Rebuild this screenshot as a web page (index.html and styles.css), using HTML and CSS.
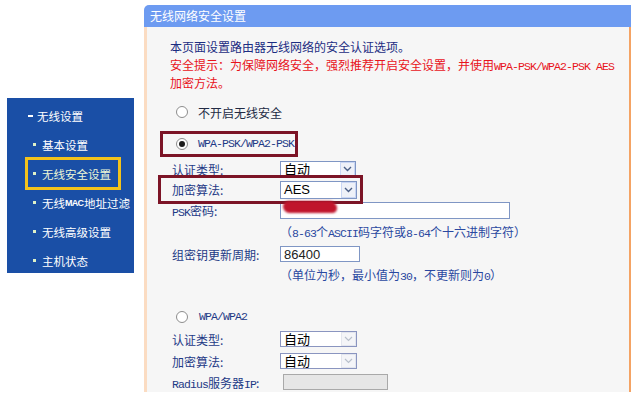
FILE: index.html
```html
<!DOCTYPE html>
<html lang="zh-CN">
<head>
<meta charset="utf-8">
<title>无线网络安全设置</title>
<link rel="stylesheet" href="styles.css">
</head>
<body>
<div class="page">
  <aside class="side">
    <nav class="menu">
      <div class="menu-head"><span class="dash"></span><span>无线设置</span></div>
      <ul class="menu-list">
        <li><span class="item"><span class="dot"></span>基本设置</span></li>
        <li><span class="item active"><span class="dot"></span>无线安全设置</span></li>
        <li><span class="item"><span class="dot"></span>无线<span class="mac">MAC</span>地址过滤</span></li>
        <li><span class="item"><span class="dot"></span>无线高级设置</span></li>
        <li><span class="item"><span class="dot"></span>主机状态</span></li>
      </ul>
    </nav>
  </aside>
  <section class="panel">
    <div class="panel-title">无线网络安全设置</div>
    <div class="panel-body">
      <p class="intro">本页面设置路由器无线网络的安全认证选项。</p>
      <p class="warn">安全提示：为保障网络安全，强烈推荐开启安全设置，并使用<span class="m">WPA-PSK/WPA2-PSK AES</span><br>加密方法。</p>

      <div class="radio-row r-off"><span class="radio"></span><span class="rtext">不开启无线安全</span></div>

      <div class="hl hl-radio"><span class="radio checked"></span><span class="rtext m">WPA-PSK/WPA2-PSK</span></div>

      <div class="row r-auth"><span class="label">认证类型:</span><span class="select s76"><span class="val">自动</span><span class="btn"><svg width="9" height="6" viewBox="0 0 9 6"><path d="M1 1 L4.5 4.5 L8 1" fill="none" stroke="#4a5f86" stroke-width="1.4"/></svg></span></span></div>

      <div class="hl hl-row"><span class="label">加密算法:</span><span class="select s77 tall"><span class="val sans">AES</span><span class="btn"><svg width="9" height="6" viewBox="0 0 9 6"><path d="M1 1 L4.5 4.5 L8 1" fill="none" stroke="#4a5f86" stroke-width="1.4"/></svg></span></span></div>

      <div class="row r-psk"><span class="label"><span class="m">PSK</span>密码:</span><span class="input w230"><span class="scribble"></span></span></div>

      <p class="hint h1">（<span class="m">8-63</span>个<span class="m">ASCII</span>码字符或<span class="m">8-64</span>个十六进制字符）</p>

      <div class="row r-group"><span class="label">组密钥更新周期:</span><span class="input w80"><span class="sans num">86400</span></span></div>

      <p class="hint h2">（单位为秒，最小值为<span class="m">30</span>，不更新则为<span class="m">0</span>）</p>

      <div class="radio-row r-wpa"><span class="radio"></span><span class="rtext m">WPA/WPA2</span></div>

      <div class="row r-auth2"><span class="label">认证类型:</span><span class="select s77 dis"><span class="val">自动</span><span class="btn"><svg width="9" height="6" viewBox="0 0 9 6"><path d="M1 1 L4.5 4.5 L8 1" fill="none" stroke="#b8c0cc" stroke-width="1.2"/></svg></span></span></div>

      <div class="row r-enc2"><span class="label">加密算法:</span><span class="select s77 dis"><span class="val">自动</span><span class="btn"><svg width="9" height="6" viewBox="0 0 9 6"><path d="M1 1 L4.5 4.5 L8 1" fill="none" stroke="#b8c0cc" stroke-width="1.2"/></svg></span></span></div>

      <div class="row r-radius"><span class="label"><span class="m">Radius</span>服务器<span class="m">IP</span>:</span><span class="input w105 gray"></span></div>
    </div>
  </section>
</div>
</body>
</html>
```

FILE: styles.css
```css
* { box-sizing: border-box; }
html, body { margin: 0; padding: 0; background: #ffffff; }
body {
  font-family: "Noto Sans CJK SC", "Noto Sans", sans-serif;
  font-size: 12px;
  color: #1e3a86;
}
p { margin: 0; }

.page {
  display: flex;
  align-items: flex-start;
  padding-top: 5px;
  width: 640px;
  height: 400px;
  overflow: hidden;
}

/* ---------- left menu ---------- */
.side { width: 144px; flex: none; }
.menu {
  margin: 93px 0 0 7px;
  width: 127px;
  height: 175px;
  background: #1a4fa6;
  color: #ffffff;
  padding-top: 3px;
  font-size: 11.5px;
  overflow: hidden;
}
.menu-head {
  display: flex;
  align-items: center;
  height: 29px;
  padding-left: 21px;
}
.dash {
  display: inline-block;
  width: 5px;
  height: 2px;
  background: #ffffff;
  margin-right: 4px;
}
.menu-list { list-style: none; margin: 0; padding: 0; }
.menu-list li {
  display: flex;
  align-items: center;
  height: 29px;
  padding-left: 26px;
}
.item {
  display: flex;
  align-items: center;
  height: 33px;
  margin-left: -8px;
  padding: 0 7px 0 5px;
  border: 3px solid transparent;
  white-space: nowrap;
}
.item.active { border-color: #f3c21b; color: #eef8d6; }
.dot {
  display: inline-block;
  width: 3px;
  height: 3px;
  background: #dff2c8;
  margin-right: 6px;
}
.mac {
  font-family: "Liberation Sans", sans-serif;
  font-size: 9px;
  font-weight: bold;
  letter-spacing: -0.8px;
  margin-right: 1px;
}

/* ---------- panel ---------- */
.panel { width: 487px; flex: none; }
.panel-title {
  height: 22px;
  line-height: 22px;
  background: #6d9bf1;
  color: #ffffff;
  padding-left: 6px;
  border-radius: 5px 0 0 0;
  font-size: 12px;
}
.panel-body {
  background: #f6f6f6;
  border-left: 3px solid #fbdcc2;
  border-right: 2px solid #f4a364;
  height: 365px;
  padding: 11px 0 0 23px;
}
.intro { line-height: 18px; height: 18px; color: #1c2d82; }
.warn { line-height: 18px; height: 36px; color: #e8131b; }
.m {
  font-family: "Liberation Mono", "DejaVu Sans Mono", monospace;
  font-size: 11.5px;
  letter-spacing: -0.9px;
  line-height: 1;
}
.sans { font-family: "Liberation Sans", "Arial", sans-serif; }

.radio-row { display: flex; align-items: center; height: 20px; }
.r-off { margin-top: 10px; padding-left: 6px; }
.r-off .rtext { margin-left: 10px; color: #222a44; }
.r-wpa { margin-top: 24px; height: 18px; padding-left: 6px; }
.r-wpa .rtext { margin-left: 11px; color: #1e3a86; }

.radio {
  display: inline-block;
  width: 12px;
  height: 12px;
  border-radius: 50%;
  border: 1px solid #8d8d8d;
  background: #ffffff;
  position: relative;
  flex: none;
}
.radio.checked::after {
  content: "";
  position: absolute;
  left: 2px;
  top: 2px;
  width: 6px;
  height: 6px;
  border-radius: 50%;
  background: #1d1d1d;
}

/* highlight boxes */
.hl { border: 3px solid #7c1426; display: flex; align-items: center; }
.hl-radio {
  margin: 9px 0 0 -10px;
  width: 138px;
  height: 26px;
  padding-left: 13px;
}
.hl-radio .rtext { margin-left: 10px; color: #1e3a86; }
.hl-row {
  margin: -2px 0 0 -12px;
  width: 205px;
  height: 29px;
  padding-left: 11px;
  position: relative;
}

.row { display: flex; align-items: center; margin-left: 2px; }
.label { width: 108px; flex: none; white-space: nowrap; }
.r-auth { margin-top: 4px; height: 16px; }
.r-psk { margin-top: -2px; height: 17px; }
.r-group { margin-top: 5px; height: 16px; }
.r-auth2 { margin-top: 5px; height: 16px; }
.r-enc2 { margin-top: 6px; height: 16px; }
.r-radius { margin-top: 5px; height: 16px; }

.select {
  display: flex;
  align-items: center;
  height: 16px;
  border: 1px solid #7f96c4;
  background: #ffffff;
  color: #000000;
  font-size: 13px;
}
.select.tall { height: 18px; }
.s76 { width: 76px; }
.s77 { width: 77px; }
.select .val { flex: 1; padding-left: 3px; line-height: 14px; }
.select .val.sans { font-size: 13px; }
.select .btn {
  width: 15px;
  height: 100%;
  border: 1px solid #c9d6f3;
  background: #eef1f8;
  display: flex;
  align-items: center;
  justify-content: center;
}
.select.dis { border-color: #8a95c0; }
.select.dis .btn { background: #f4f5f8; border-color: #e3e6ee; }

.input {
  display: flex;
  align-items: center;
  border: 1px solid #7f96c4;
  background: #ffffff;
  color: #111111;
}
.w230 { width: 230px; height: 17px; }
.w80 { width: 80px; height: 16px; }
.w105 { width: 105px; height: 16px; margin-left: 3px; }
.input.gray { background: #e6e6e6; border-color: #a9a9a9; }
.num { font-size: 13px; padding-left: 3px; color: #222222; }
.scribble {
  display: inline-block;
  width: 54px;
  height: 12px;
  margin: -8px 0 0 2px;
  background: #c0152c;
  border-radius: 6px 8px 5px 7px;
  filter: blur(1.3px);
}

.hint { line-height: 18px; height: 18px; color: #2a48a0; margin-left: 110px; white-space: nowrap; }
.h1 { margin-top: 4px; }
.h2 { margin-top: 4px; }
```
